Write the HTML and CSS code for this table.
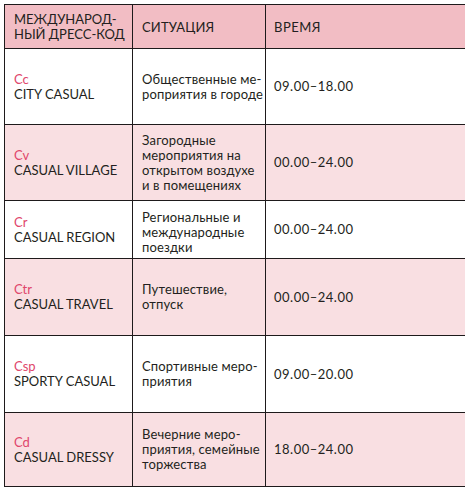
FILE: index.html
```html
<!DOCTYPE html>
<html lang="ru">
<head>
<meta charset="utf-8">
<link rel="stylesheet" href="styles.css">
</head>
<body>
<div class="wrap">
<table class="dress">
  <colgroup><col class="c1"><col class="c2"><col class="c3"></colgroup>
  <tr class="head h-head">
    <td>МЕЖДУНАРОД-<br>НЫЙ ДРЕСС-КОД</td>
    <td>СИТУАЦИЯ</td>
    <td>ВРЕМЯ</td>
  </tr>
  <tr class="h76">
    <td><span class="code">Cc</span><br>CITY CASUAL</td>
    <td>Общественные ме-<br>роприятия в городе</td>
    <td>09.00–18.00</td>
  </tr>
  <tr class="alt h76">
    <td><span class="code">Cv</span><br>CASUAL VILLAGE</td>
    <td>Загородные<br>мероприятия на<br>открытом воздухе<br>и в помещениях</td>
    <td>00.00–24.00</td>
  </tr>
  <tr class="h58">
    <td><span class="code">Cr</span><br>CASUAL REGION</td>
    <td class="low">Региональные и<br>международные<br>поездки</td>
    <td>00.00–24.00</td>
  </tr>
  <tr class="alt h77">
    <td><span class="code">Ctr</span><br>CASUAL TRAVEL</td>
    <td>Путешествие,<br>отпуск</td>
    <td>00.00–24.00</td>
  </tr>
  <tr class="h77">
    <td><span class="code">Csp</span><br>SPORTY CASUAL</td>
    <td>Спортивные меро-<br>приятия</td>
    <td>09.00–20.00</td>
  </tr>
  <tr class="alt h74">
    <td><span class="code">Cd</span><br>CASUAL DRESSY</td>
    <td>Вечерние меро-<br>приятия, семейные<br>торжества</td>
    <td>18.00–24.00</td>
  </tr>
</table>
</div>
</body>
</html>
```
FILE: styles.css
```css
html, body {
  margin: 0;
  padding: 0;
  background: #ffffff;
}
.wrap {
  padding: 4px 0 0 4px;
  overflow: hidden;
  width: 461px;
}
.dress {
  border-collapse: collapse;
  width: 470px;
  table-layout: fixed;
  font-family: "Lato", "Liberation Sans", sans-serif;
  font-size: 13px;
  line-height: 15px;
  color: #231f20;
}
.c1 { width: 128px; }
.c2 { width: 133px; }
.c3 { width: 209px; }
.dress td {
  border: 1px solid #1e1a1b;
  padding: 0 0 0 9px;
  vertical-align: middle;
  white-space: nowrap;
  overflow: hidden;
}
.dress td:nth-child(2) { letter-spacing: 0.15px; }
.dress td:last-child {
  border-right: none;
  padding-left: 8px;
  letter-spacing: 0.5px;
}
.head { background: #f2bdc4; }
.head td { padding-top: 1px; }
.alt { background: #f9dfe2; }
.code { color: #e0466b; }
.low { padding-top: 6px !important; }
.h-head { height: 44px; }
.h76 { height: 76px; }
.h58 { height: 58px; }
.h77 { height: 77px; }
.h74 { height: 74px; }
```
